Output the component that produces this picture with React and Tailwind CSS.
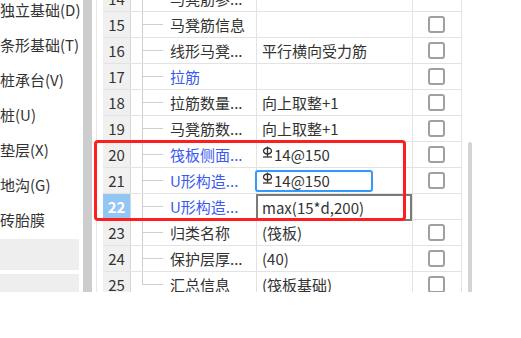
import React from "react";

const sideItems = ["独立基础(D)", "条形基础(T)", "桩承台(V)", "桩(U)", "垫层(X)", "地沟(G)", "砖胎膜"];

const rows = [
  { no: 14, name: "马凳筋参...", value: "", check: false },
  { no: 15, name: "马凳筋信息", value: "", check: true },
  { no: 16, name: "线形马凳...", value: "平行横向受力筋", check: true },
  { no: 17, name: "拉筋", blue: true, value: "", check: true },
  { no: 18, name: "拉筋数量...", value: "向上取整+1", check: true },
  { no: 19, name: "马凳筋数...", value: "向上取整+1", check: true },
  { no: 20, name: "筏板侧面...", blue: true, value: "14@150", rebar: true, check: true },
  { no: 21, name: "U形构造...", blue: true, value: "14@150", rebar: true, input: true, check: true },
  { no: 22, name: "U形构造...", blue: true, value: "max(15*d,200)", editing: true, selected: true, check: false },
  { no: 23, name: "归类名称", value: "(筏板)", check: true },
  { no: 24, name: "保护层厚...", value: "(40)", check: true },
  { no: 25, name: "汇总信息", value: "(筏板基础)", check: true, last: true }
];

const Rebar = () => (
  <svg width="11" height="13" viewBox="0 0 11 13" className="mr-[1px] -mt-[5px] shrink-0">
    <ellipse cx="5.5" cy="5" rx="4" ry="3" fill="none" stroke="#333" strokeWidth="1.3" />
    <line x1="5.5" y1="0.5" x2="5.5" y2="11" stroke="#333" strokeWidth="1.3" />
    <line x1="1" y1="11" x2="10" y2="11" stroke="#333" strokeWidth="1.3" />
  </svg>
);

const ValueText = ({ row }) => (
  <span className="flex items-center">
    {row.rebar && <Rebar />}
    {row.value}
  </span>
);

const Row = ({ row }) => (
  <div className="flex h-[26px] border-b border-[#e3e3e3]">
    <div
      className={`w-[28px] shrink-0 flex items-center justify-center border-r border-[#d6d6d6] ${
        row.selected ? "bg-[#94c6f4] text-white font-bold" : "bg-[#f0f0f0] text-[#333]"
      }`}
    >
      {row.no}
    </div>
    <div className="w-[126px] shrink-0 flex items-stretch pl-[11px] border-r border-[#e3e3e3] overflow-hidden">
      <div className="w-[21px] shrink-0 flex flex-col">
        <div className="h-1/2 border-l border-b border-[#cfcfcf]" />
        <div className={`h-1/2 ${row.last ? "" : "border-l border-[#cfcfcf]"}`} />
      </div>
      <div className={`ml-[7px] flex items-center whitespace-nowrap ${row.blue ? "text-[#3a5af0]" : "text-[#333]"}`}>
        {row.name}
      </div>
    </div>
    <div className="w-[156px] shrink-0 flex items-center border-r border-[#e3e3e3] text-[#333] whitespace-nowrap">
      {row.input ? (
        <div className="-ml-[2px] w-[118px] h-[22px] border-2 border-[#3399ff] rounded-[3px] flex items-center pl-[5px]">
          <ValueText row={row} />
        </div>
      ) : row.editing ? (
        <div className="-ml-[1px] w-[157px] h-[27px] -mb-[1px] border-2 border-[#7a7a7a] flex items-center pl-[4px]">
          <ValueText row={row} />
        </div>
      ) : (
        <div className="pl-[5px]">
          <ValueText row={row} />
        </div>
      )}
    </div>
    <div className="w-[49px] shrink-0 flex items-center justify-center border-r border-[#e3e3e3]">
      {row.check && <div className="w-[17px] h-[17px] border-2 border-[#a0a0a0] rounded-[3px] bg-white -ml-[1px]" />}
    </div>
  </div>
);

export default function App() {
  return (
    <div
      className="relative w-[521px] h-[338px] bg-white overflow-hidden text-[15px] leading-none"
      style={{ fontFamily: '"Noto Sans CJK SC", "Noto Sans", sans-serif' }}
    >
      <div className="flex h-[292px]">
        {/* side list */}
        <div className="w-[80px] shrink-0 overflow-hidden">
          <div className="-mt-[8px]">
            {sideItems.map((s) => (
              <div key={s} className="h-[35px] flex items-center whitespace-nowrap text-[#333]">
                {s}
              </div>
            ))}
          </div>
          <div className="mt-[2px] w-[79px] h-[31px] bg-[#eeeeee]" />
          <div className="mt-[4px] w-[79px] h-[30px] bg-[#eeeeee]" />
        </div>
        <div className="ml-[3px] w-[9px] shrink-0 bg-[#cdcdcd]" />
        <div className="ml-[4px] border-l border-[#e8e8e8] pl-[6px] overflow-hidden">
          <div className="-mt-[14px]">
            {rows.map((r) => (
              <Row key={r.no} row={r} />
            ))}
          </div>
        </div>
        <div className="ml-[6px] mt-[142px] w-[4px] bg-[#d4d4d4] rounded-t-[2px]" />
      </div>

      {/* highlight frame */}
      <div className="absolute left-[94px] top-[140px] w-[312px] h-[81px] border-[3px] border-[#ff1e1e] rounded-[4px]" />
    </div>
  );
}
